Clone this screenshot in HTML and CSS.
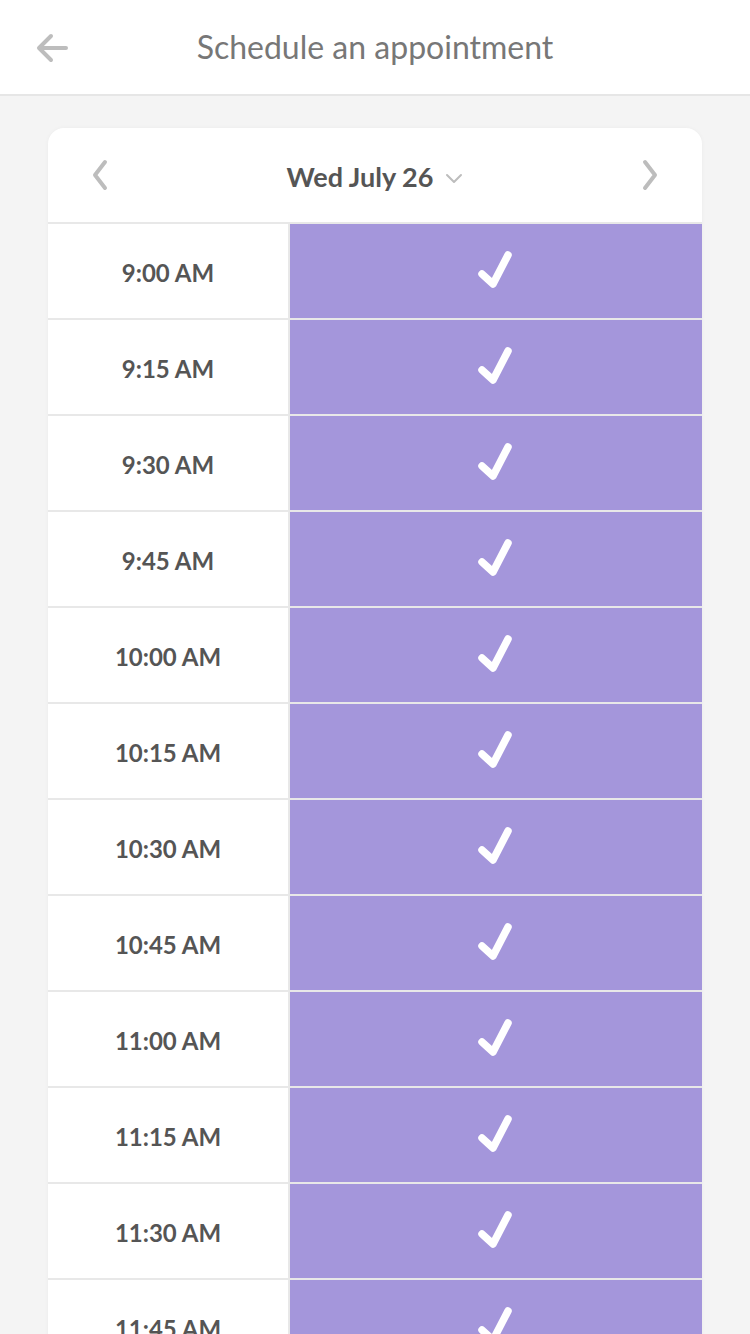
FILE: index.html
```html
<!DOCTYPE html>
<html>
<head>
<meta charset="utf-8">
<link rel="stylesheet" href="styles.css">
</head>
<body>
<header class="topbar">
  <button class="back" aria-label="Back">
    <svg width="34" height="34" viewBox="0 0 34 34"><path d="M31 17H5M16 5L4 17l12 12" fill="none" stroke="#bdbdbd" stroke-width="4" stroke-linecap="round" stroke-linejoin="round"/></svg>
  </button>
  <h1 class="title">Schedule an appointment</h1>
</header>
<main class="page">
  <section class="card">
    <div class="card-head">
      <svg class="nav" width="20" height="32" viewBox="0 0 20 32"><path d="M15 3L5 16l10 13" fill="none" stroke="#bdbdbd" stroke-width="4" stroke-linecap="round" stroke-linejoin="round"/></svg>
      <div class="date">Wed July 26
        <svg class="caret" width="18" height="12" viewBox="0 0 18 12"><path d="M2 3l7 7 7-7" fill="none" stroke="#bdbdbd" stroke-width="2" stroke-linecap="round" stroke-linejoin="round"/></svg>
      </div>
      <svg class="nav" width="20" height="32" viewBox="0 0 20 32"><path d="M5 3l10 13L5 29" fill="none" stroke="#bdbdbd" stroke-width="4" stroke-linecap="round" stroke-linejoin="round"/></svg>
    </div>
    <div class="rows" id="rows"></div>
  </section>
</main>
<script src="app.js"></script>
</body>
</html>
```
FILE: app.js
```js
const times = ["9:00 AM","9:15 AM","9:30 AM","9:45 AM","10:00 AM","10:15 AM","10:30 AM","10:45 AM","11:00 AM","11:15 AM","11:30 AM","11:45 AM"];
const rows = document.getElementById("rows");
const check = '<svg width="46" height="46" viewBox="0 0 46 46"><path d="M9 26l11 10L35 7" fill="none" stroke="#fff" stroke-width="7.5" stroke-linecap="round" stroke-linejoin="round"/></svg>';
rows.innerHTML = times.map(t => '<div class="row"><div class="time">' + t + '</div><div class="slot">' + check + '</div></div>').join("");
```
FILE: styles.css
```css
* { box-sizing: border-box; }
html, body { margin: 0; padding: 0; }
body {
  width: 750px;
  height: 1334px;
  overflow: hidden;
  background: #f4f4f4;
  font-family: "Lato", "Open Sans", sans-serif;
}
.topbar {
  height: 96px;
  background: #fff;
  border-bottom: 2px solid #e6e6e6;
  display: flex;
  align-items: center;
  justify-content: center;
  position: relative;
}
.back {
  position: absolute;
  left: 35px;
  top: 31px;
  border: 0;
  background: none;
  padding: 0;
  width: 34px;
  height: 34px;
}
.title {
  margin: 0;
  font-size: 32px;
  font-weight: 400;
  color: #777;
  padding-bottom: 2px;
}
.page {
  padding: 32px 48px 0;
}
.card {
  background: #fff;
  border-radius: 16px 16px 0 0;
  box-shadow: 0 0 4px rgba(0,0,0,0.04);
  overflow: hidden;
}
.card-head {
  height: 96px;
  border-bottom: 2px solid #e8e8e8;
  display: flex;
  align-items: center;
  justify-content: space-between;
  padding: 0 42px 0 42px;
}
.date {
  display: flex;
  align-items: center;
  gap: 12px;
  font-size: 27px;
  font-weight: 700;
  color: #555;
  padding-bottom: 2px;
  margin-top: 4px;
}
.caret { margin-top: 4px; }
.row {
  display: grid;
  grid-template-columns: 240px 2px 1fr;
  height: 96px;
  border-bottom: 2px solid #e8e8e8;
}
.time {
  display: flex;
  align-items: center;
  justify-content: center;
  font-size: 24px;
  font-weight: 700;
  color: #555;
  border-right: 2px solid #e8e8e8;
  grid-column: 1 / 3;
  padding-top: 2px;
}
.slot {
  background: #a496db;
  display: flex;
  align-items: center;
  justify-content: center;
}
```
